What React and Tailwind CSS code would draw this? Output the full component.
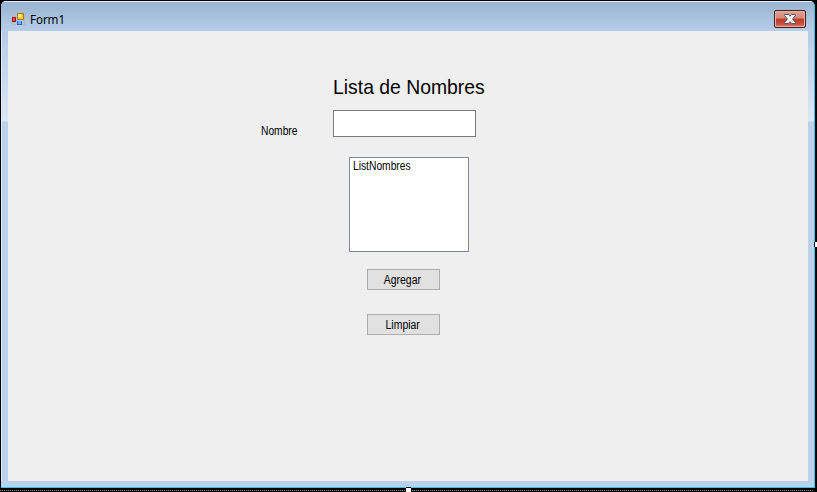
function FormIcon() {
  return (
    <svg width="14" height="14" viewBox="0 0 14 14" shapeRendering="crispEdges" className="shrink-0">
      <rect x="0.5" y="0.5" width="12" height="12" fill="none" stroke="#b3b8be" />
      <rect x="5" y="1" width="7" height="7" fill="#a87a10" />
      <rect x="6" y="2" width="5" height="5" fill="#ffc928" />
      <rect x="6" y="2" width="3" height="3" fill="#ffe78c" />
      <rect x="0" y="5" width="4" height="5" fill="#9a1710" />
      <rect x="1" y="6" width="2" height="3" fill="#e0503a" />
      <rect x="5" y="9" width="5" height="4" fill="#3560bb" />
      <rect x="6" y="9" width="3" height="3" fill="#7ba9f2" />
    </svg>
  );
}

function CloseButton() {
  return (
    <button
      aria-label="Close"
      className="flex h-[18px] w-8 items-center justify-center rounded-[2px] border border-[#4a1d20] bg-[linear-gradient(to_bottom,#e0a194_0%,#d58778_45%,#bd3a25_50%,#c34a36_75%,#d67a6a_100%)] shadow-[inset_0_0_0_1px_#e6b0a5]"
    >
      <svg width="12" height="10" viewBox="0 0 12 10">
        <path d="M.6 .5H4.4L6 2.3L7.6 .5H11.4V1.6L8.6 5L11.4 8.4V9.5H7.6L6 7.7L4.4 9.5H.6V8.4L3.4 5L.6 1.6Z" fill="#f6f6f6" stroke="#535666" />
      </svg>
    </button>
  );
}

const sideGlass =
  "w-[7px] shrink-0 bg-[linear-gradient(to_bottom,#b6cde7_0px,#c2d6ed_35px,#dce7f5_90px,#b9d1ea_91px)]";

const caption = "inline-block whitespace-nowrap text-[12px] leading-[13px]";

function FormButton({ children }) {
  return (
    <button className="flex h-[21px] w-[73px] items-center justify-center border border-[#adadad] bg-[#e1e1e1] pr-[2px] pt-px">
      <span className={caption + " scale-x-[0.87]"}>{children}</span>
    </button>
  );
}

export default function App() {
  return (
    <div className="relative flex h-[492px] w-[817px] flex-col overflow-hidden bg-black font-['Liberation_Sans',Arial,sans-serif] text-black">
      <div className="ml-px mt-px flex h-[487px] w-[814px] flex-col overflow-hidden rounded-t-[5px] border-b border-r border-[#35c5e5] bg-[#b9d1ea]">
        <header className="flex h-[30px] shrink-0 items-start justify-between border-t border-[#e3edf7] bg-[linear-gradient(to_bottom,#98b4d2,#b7cee8)] pl-[11px] pr-2">
          <div className="flex pt-[10px]">
            <FormIcon />
            <span className="ml-[4px] mt-px origin-left scale-x-[0.97] font-['Noto_Sans',sans-serif] text-[12px] leading-[14px] tracking-[-0.1px]">
              Form1
            </span>
          </div>
          <div className="pt-2">
            <CloseButton />
          </div>
        </header>
        <div className="flex h-[450px] shrink-0">
          <div className={sideGlass + " border-l border-[#e3edf7]"} />
          <main className="flex w-[800px] shrink-0 flex-col bg-[#efefef]">
            <h1 className="ml-[325px] mt-[44px] h-[25px] w-[170px] origin-left scale-x-[0.922] whitespace-nowrap text-[21px] leading-[24px]">
              Lista de Nombres
            </h1>
            <div className="ml-[253px] mt-[10px] flex h-[27px]">
              <label className="flex w-[72px] items-start pt-[15px]">
                <span className={caption + " origin-left scale-x-[0.855]"}>Nombre</span>
              </label>
              <input className="h-[27px] w-[143px] border border-[#7a7a7a] bg-white" />
            </div>
            <div className="ml-[341px] mt-5 flex h-[95px] w-[120px] items-start border border-[#828790] bg-white pl-[3px] pt-[2px]">
              <span className={caption + " origin-left scale-x-[0.855]"}>ListNombres</span>
            </div>
            <div className="ml-[359px] mt-[17px] flex flex-col gap-6">
              <FormButton>Agregar</FormButton>
              <FormButton>Limpiar</FormButton>
            </div>
          </main>
          <div className={sideGlass} />
        </div>
      </div>
      <div className="h-[2px] shrink-0" />
      <div className="h-px w-[814px] shrink-0 bg-[repeating-linear-gradient(to_right,#888_0px,#888_1px,#111_1px,#111_2px)]" />
      <span className="absolute left-[406px] top-[487px] h-[5px] w-[5px] border-t border-black bg-white" />
      <span className="absolute left-[814px] top-[242px] h-[5px] w-[3px] border-l border-black bg-white" />
    </div>
  );
}
